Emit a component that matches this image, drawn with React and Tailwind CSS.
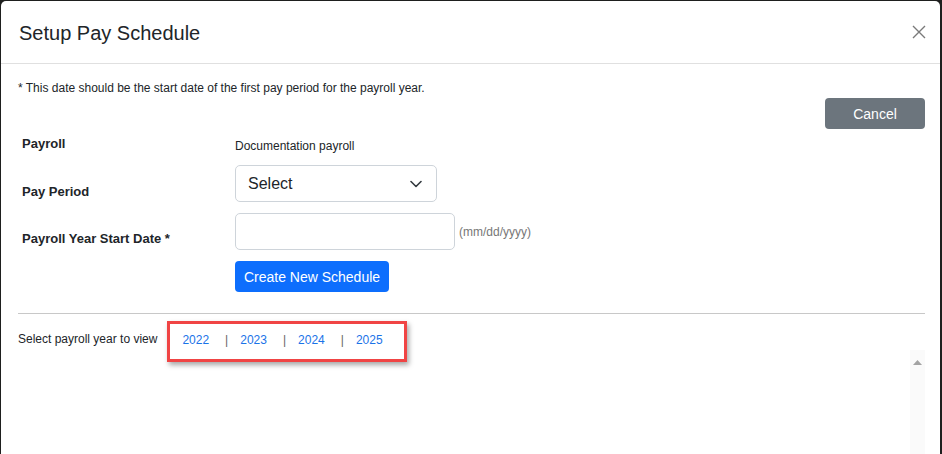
import React from "react";

function CloseIcon() {
  return (
    <svg width="14" height="14" viewBox="0 0 14 14" fill="none">
      <path d="M1 1L13 13M13 1L1 13" stroke="#7a7a7a" strokeWidth="1.4" />
    </svg>
  );
}

function Chevron() {
  return (
    <svg width="12" height="8" viewBox="0 0 12 8" fill="none">
      <path d="M1 1.5L6 6.5L11 1.5" stroke="#343a40" strokeWidth="1.6" strokeLinecap="round" strokeLinejoin="round" />
    </svg>
  );
}

export default function App() {
  const years = ["2022", "2023", "2024", "2025"];
  return (
    <div
      className="w-[942px] h-[454px] overflow-hidden bg-[#1e1f1e] pt-px pl-px pr-[2px]"
      style={{ fontFamily: '"Liberation Sans", Arial, sans-serif' }}
    >
      <div className="bg-white h-[460px] rounded-t-[5px] text-[#212529]">
        {/* Header */}
        <div className="h-[63px] border-b border-[#e0e0e0] flex items-center justify-between pl-[18px] pr-[14px]">
          <div className="text-[20px] leading-[24px] pt-px">Setup Pay Schedule</div>
          <CloseIcon />
        </div>

        {/* Body */}
        <div className="pl-[17px] pr-[15px] pt-[16px]">
          <div className="text-[12px] leading-[16px]">
            * This date should be the start date of the first pay period for the payroll year.
          </div>

          <div className="flex justify-end mt-[2px]">
            <button className="w-[100px] h-[31px] rounded-[4px] bg-[#6c757d] text-white text-[14px] leading-[16px]">
              Cancel
            </button>
          </div>

          {/* Form */}
          <div className="grid grid-cols-[213px_1fr] pl-[4px] mt-[7px] gap-y-[11px]">
            <div className="text-[13px] leading-[16px] font-bold">Payroll</div>
            <div className="text-[12px] leading-[16px] pt-[2px]">Documentation payroll</div>

            <div className="text-[13px] leading-[16px] font-bold pt-[19px]">Pay Period</div>
            <div>
              <div className="w-[202px] h-[37px] border border-[#ced4da] rounded-[5px] flex items-center justify-between pl-[12px] pr-[14px]">
                <span className="text-[16px] leading-[20px]">Select</span>
                <Chevron />
              </div>
            </div>

            <div className="text-[13px] leading-[16px] font-bold pt-[18px]">Payroll Year Start Date *</div>
            <div className="flex items-center">
              <div className="w-[220px] h-[37px] border border-[#ced4da] rounded-[5px]" />
              <span className="ml-[4px] text-[12px] leading-[14px] text-[#777777]">(mm/dd/yyyy)</span>
            </div>

            <div />
            <div>
              <button className="w-[154px] h-[31px] rounded-[4px] bg-[#0d6efd] text-white text-[14px] leading-[16px]">
                Create New Schedule
              </button>
            </div>
          </div>

          {/* Separator */}
          <div className="mt-[21px] h-px bg-[#c8c8c8]" />

          {/* Year selector */}
          <div className="flex justify-between mt-[7px]">
            <div className="flex items-start">
              <div className="text-[12px] leading-[16px] mt-[10px]">Select payroll year to view</div>
              <div className="ml-[10px] h-[41px] border-[3px] border-[#f04444] shadow-[2px_3px_5px_rgba(0,0,0,0.35)] pl-[12px] pr-[21px] pt-[8px] flex items-start">
                {years.map((y, i) => (
                  <div key={y} className="flex items-start text-[12px] leading-[16px]">
                    <span className="text-[#1a73e8]">{y}</span>
                    {i < years.length - 1 && (
                      <span className="ml-[16px] mr-[12px] text-[#666666]">|</span>
                    )}
                  </div>
                ))}
              </div>
            </div>
            <div className="mt-[29px] w-[15px] h-[200px] bg-[#fafafa] pt-[10px] pl-[3px]">
              <svg width="9" height="5" viewBox="0 0 9 5">
                <path d="M0 5L4.5 0L9 5Z" fill="#a3a3a3" />
              </svg>
            </div>
          </div>
        </div>
      </div>
    </div>
  );
}
